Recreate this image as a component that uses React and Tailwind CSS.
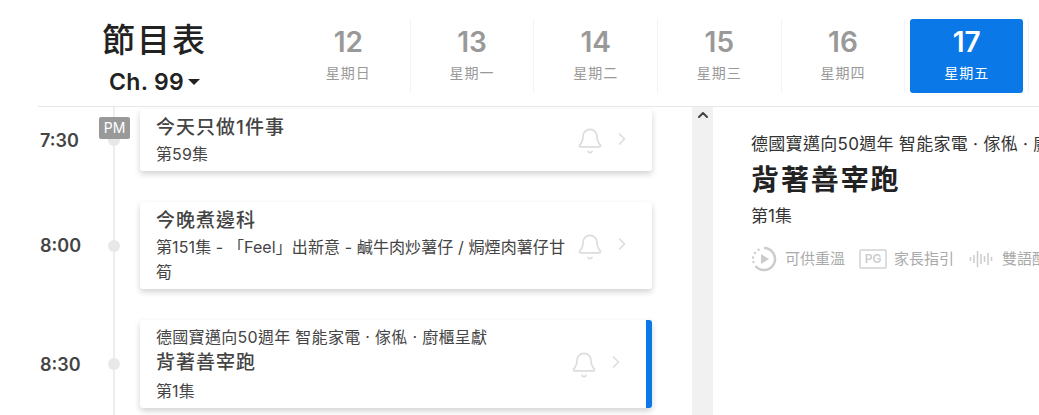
import { Bell, ChevronRight, ChevronUp } from 'lucide-react'

const font = { fontFamily: 'Inter, "Noto Sans CJK TC", sans-serif' }

const days = [
  { num: '12', label: '星期日' },
  { num: '13', label: '星期一' },
  { num: '14', label: '星期二' },
  { num: '15', label: '星期三' },
  { num: '16', label: '星期四' },
  { num: '17', label: '星期五', active: true },
]

const programmes = [
  { time: '7:30', pm: true, title: '今天只做1件事', sub: '第59集' },
  { time: '8:00', title: '今晚煮邊科', sub: '第151集 - 「Feel」出新意 - 鹹牛肉炒薯仔 / 焗煙肉薯仔甘筍' },
  { time: '8:30', ad: '德國寶邁向50週年 智能家電 · 傢俬 · 廚櫃呈獻', title: '背著善宰跑', sub: '第1集', active: true },
]

function Day({ day }) {
  if (day.active) {
    return (
      <div className="px-[5px] border-r border-gray-100 h-[74px]">
        <div className="h-full rounded-[3px] bg-[#0a78e6] text-white flex flex-col items-center">
          <span className="text-[28px] leading-[34px] mt-[6px] font-semibold">{day.num}</span>
          <span className="text-[14px] leading-5 mt-[4px] tracking-[1px]">{day.label}</span>
        </div>
      </div>
    )
  }
  return (
    <div className="border-r border-gray-100 h-[74px] text-[#999] flex flex-col items-center">
      <span className="text-[28px] leading-[34px] mt-[6px] font-semibold">{day.num}</span>
      <span className="text-[14px] leading-5 mt-[4px] tracking-[1px]">{day.label}</span>
    </div>
  )
}

function Row({ item }) {
  return (
    <div className="relative flex items-center pl-[40px]">
      <span className="w-[68px] shrink-0 text-[18px] font-semibold text-[#444]">{item.time}</span>
      <span className="w-[12px] h-[12px] shrink-0 rounded-full bg-[#e8e8e8]" />
      {item.pm && (
        <span className="absolute left-[99px] top-[8px] w-[31px] h-[22px] rounded-[2px] bg-[#999] text-white text-[14px] leading-[22px] text-center">PM</span>
      )}
      <div className={`ml-[20px] w-[512px] flex items-center rounded-[3px] bg-white shadow-[0_3px_6px_rgba(0,0,0,0.18)] pl-4 pr-[20px] ${item.ad ? 'pt-[5px] pb-[4px]' : 'pt-[6px] pb-[4px]'} ${item.active ? 'border-r-[6px] border-[#0a78e6]' : ''}`}>
        <div className="flex-1 min-w-0 text-[#444]">
          {item.ad && <p className="mb-[1px] text-[16px] leading-6 tracking-[0.3px] truncate">{item.ad}</p>}
          <p className="text-[19px] leading-[26px] font-medium tracking-[1px]">{item.title}</p>
          <p className={`${item.ad ? 'mt-[3px]' : 'mt-[1px]'} text-[16px] leading-[25px] tracking-[0.1px]`}>{item.sub}</p>
        </div>
        <Bell className="ml-[6px] shrink-0 text-[#ddd]" size={28} strokeWidth={1.5} />
        <ChevronRight className="ml-[8px] mb-[5px] shrink-0 text-[#ddd]" size={20} strokeWidth={2} />
      </div>
    </div>
  )
}

function ReplayIcon() {
  return (
    <svg width="26" height="26" viewBox="0 0 26 26" fill="none" className="shrink-0 text-[#ccc]">
      <path d="M13 2a11 11 0 1 1-8.500 18" stroke="currentColor" strokeWidth="2.500" />
      <circle cx="2.500" cy="16" r="1.200" fill="currentColor" />
      <circle cx="2" cy="11.500" r="1.200" fill="currentColor" />
      <circle cx="4" cy="7" r="1.200" fill="currentColor" />
      <circle cx="7.500" cy="3.800" r="1.200" fill="currentColor" />
      <path d="M10 8v10l8-5z" fill="currentColor" />
    </svg>
  )
}

function WaveIcon() {
  return (
    <svg width="24" height="18" viewBox="0 0 24 18" stroke="currentColor" strokeWidth="1.500" className="text-[#ccc]">
      <path d="M1.500 7v4M5 5v8M8.500 1v16M12 4v10M15.500 6v6M19 3v12M22.500 7v4" />
    </svg>
  )
}

export default function App() {
  return (
    <div className="h-[415px] w-[1039px] overflow-hidden bg-white" style={font}>
      {/* Header */}
      <header className="ml-[38px] h-[107px] border-b border-gray-200 flex">
        <div className="w-[249px] shrink-0 pl-[64px] pt-[18px]">
          <h1 className="text-[33px] leading-[44px] font-medium tracking-[2px] text-[#222]">節目表</h1>
          <button className="mt-[6px] ml-[7px] flex items-center gap-[4px] text-[23px] leading-7 font-semibold tracking-[0.3px] text-[#222]">
            Ch. 99
            <span className="w-0 h-0 border-x-[6px] border-x-transparent border-t-[6px] border-t-[#222]" />
          </button>
        </div>
        <div className="w-[742px] pt-[19px] grid grid-cols-6">
          {days.map((d) => <Day key={d.num} day={d} />)}
        </div>
      </header>

      <div className="flex h-[308px]">
        {/* Schedule list */}
        <div className="relative w-[692px] shrink-0 overflow-hidden pt-[2px] flex flex-col gap-[31px]">
          <div className="absolute left-[113px] top-0 bottom-0 w-[2px] bg-[#eee]" />
          {programmes.map((p) => <Row key={p.time} item={p} />)}
        </div>

        {/* Scrollbar */}
        <div className="w-[21px] shrink-0 bg-[#f1f1f1] flex justify-center">
          <ChevronUp className="text-[#444]" size={16} strokeWidth={3} />
        </div>

        {/* Detail */}
        <div className="flex-1 min-w-0 overflow-hidden pl-[38px] pt-[25px] text-[#333] whitespace-nowrap">
          <p className="text-[17px] leading-6 tracking-[0.3px]">德國寶邁向50週年 智能家電 · 傢俬 · 廚櫃呈獻</p>
          <h2 className="text-[28px] leading-[38px] mt-[5px] font-semibold tracking-[1.900px] text-[#222]">背著善宰跑</h2>
          <p className="text-[17px] leading-6 mt-[5px]">第1集</p>
          <div className="mt-[18px] flex items-center text-[15px] text-[#aaa]">
            <ReplayIcon />
            <span className="ml-[8px] shrink-0">可供重溫</span>
            <span className="ml-[14px] shrink-0 w-[28px] h-[20px] border-2 border-[#ddd] rounded-[2px] text-[12px] leading-[16px] font-semibold text-center text-[#ccc]">PG</span>
            <span className="ml-[7px] shrink-0">家長指引</span>
            <span className="ml-[15px] shrink-0"><WaveIcon /></span>
            <span className="ml-[9px] shrink-0">雙語配音</span>
          </div>
        </div>
      </div>
    </div>
  )
}
